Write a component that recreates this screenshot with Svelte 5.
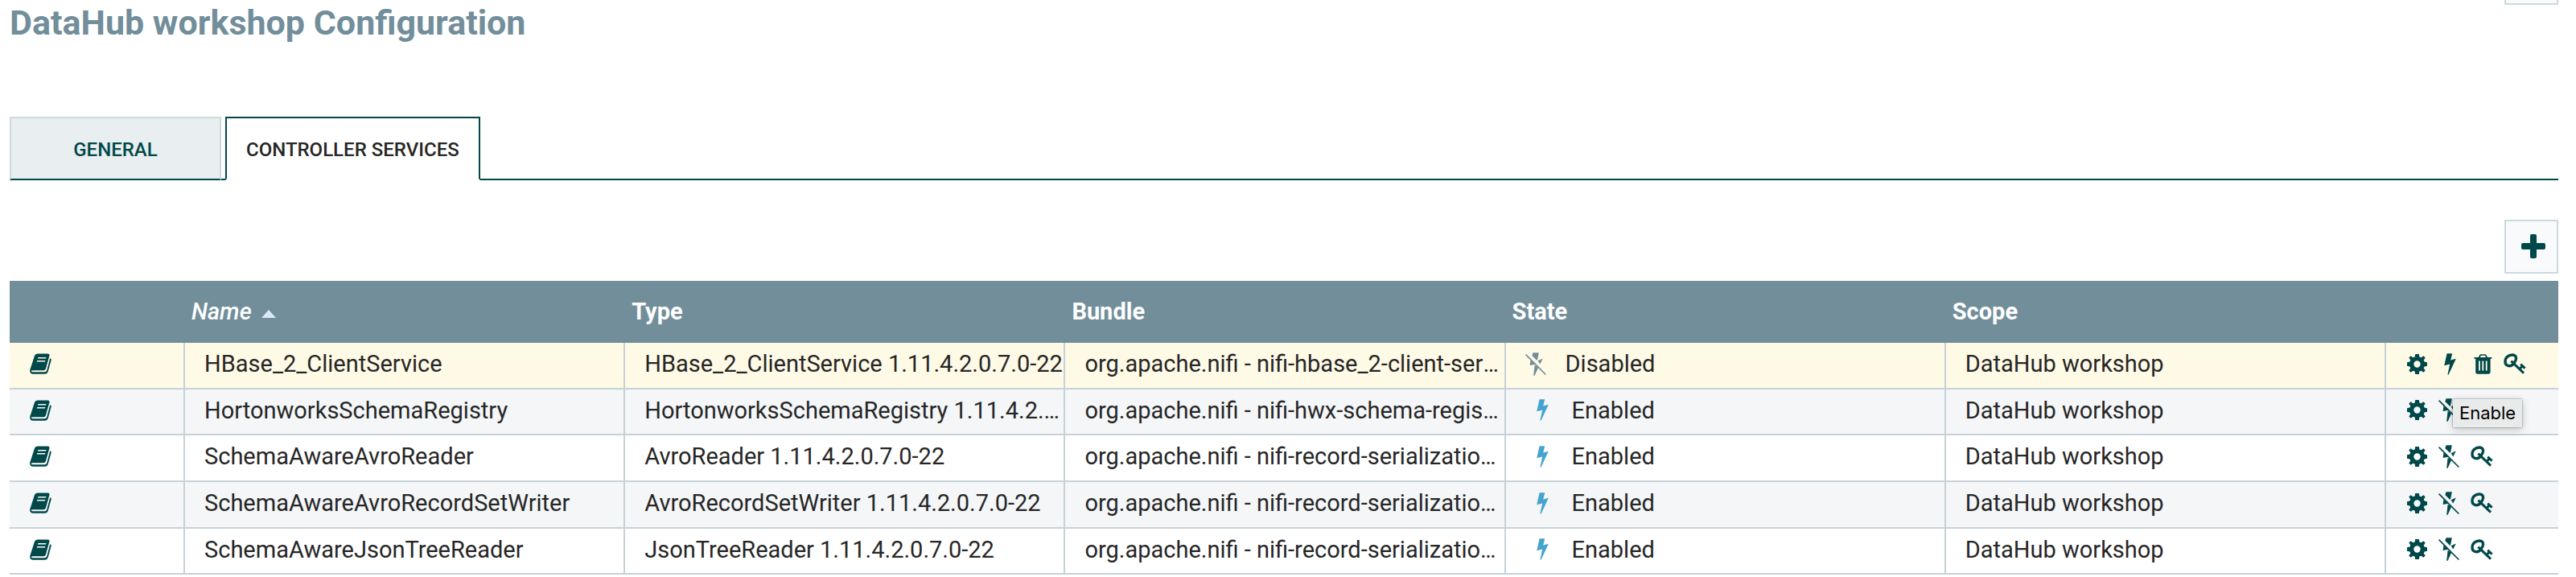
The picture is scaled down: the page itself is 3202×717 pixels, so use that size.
<script>
  const services = [
    { name: 'HBase_2_ClientService', type: 'HBase_2_ClientService 1.11.4.2.0.7.0-22', bundle: 'org.apache.nifi - nifi-hbase_2-client-services-nar', enabled: false },
    { name: 'HortonworksSchemaRegistry', type: 'HortonworksSchemaRegistry 1.11.4.2.0.7.0-22', bundle: 'org.apache.nifi - nifi-hwx-schema-registry-nar', enabled: true, tooltip: 'Enable' },
    { name: 'SchemaAwareAvroReader', type: 'AvroReader 1.11.4.2.0.7.0-22', bundle: 'org.apache.nifi - nifi-record-serialization-services-nar', enabled: true },
    { name: 'SchemaAwareAvroRecordSetWriter', type: 'AvroRecordSetWriter 1.11.4.2.0.7.0-22', bundle: 'org.apache.nifi - nifi-record-serialization-services-nar', enabled: true },
    { name: 'SchemaAwareJsonTreeReader', type: 'JsonTreeReader 1.11.4.2.0.7.0-22', bundle: 'org.apache.nifi - nifi-record-serialization-services-nar', enabled: true },
  ];
  let selected = $state(0);
</script>

{#snippet book()}
  <svg width="27" height="26" viewBox="0 0 27 26" aria-hidden="true">
    <path fill="currentColor" fill-rule="evenodd" d="M9.5 0.5H22.5Q25 0.5 24.4 3L20 19Q19.3 21.3 17 21.3H3.5Q1.8 21.3 2 22.4Q2.2 23.2 3.6 23.2H18.5Q20.6 23.2 21.2 21.2L25.2 6.2Q27.2 6.6 26.6 8.8L22.6 23Q21.7 25.8 19 25.8H4Q0.4 25.8 0.2 22Q0.1 20.6 0.8 19L6 3Q6.8 0.5 9.5 0.5ZM10.4 5L9.9 6.6H20L20.5 5ZM9.2 9L8.7 10.6H18.9L19.4 9Z" />
  </svg>
{/snippet}

{#snippet gear()}
  <svg width="25" height="25" viewBox="0 0 25 25" aria-hidden="true">
    <path fill="currentColor" fill-rule="evenodd" d="M10.2 0H14.8L15.4 3.4L17.6 4.3L20.4 2.3L22.7 4.6L20.7 7.4L21.6 9.6L25 10.2V14.8L21.6 15.4L20.7 17.6L22.7 20.4L20.4 22.7L17.6 20.7L15.4 21.6L14.8 25H10.2L9.6 21.6L7.4 20.7L4.6 22.7L2.3 20.4L4.3 17.6L3.4 15.4L0 14.8V10.2L3.4 9.6L4.3 7.4L2.3 4.6L4.6 2.3L7.4 4.3L9.6 3.4ZM12.5 8.3A4.2 4.2 0 1 0 12.5 16.7A4.2 4.2 0 1 0 12.5 8.3Z" />
  </svg>
{/snippet}

{#snippet bolt()}
  <svg width="15" height="27" viewBox="0 0 15 27" aria-hidden="true">
    <path fill="currentColor" d="M3.6 0.2H10.2L8.2 8.4L14.8 6.8L5.6 26.6H4.4L7.2 13.6L0.2 15.2Z" />
  </svg>
{/snippet}

{#snippet boltOff()}
  <svg width="26" height="29" viewBox="0 0 26 29" aria-hidden="true">
    <path fill="currentColor" d="M9.6 0.2H16.8L15.2 8.6L14.4 10L8.3 4ZM6.5 9.2L12.3 14.7L5.6 16ZM15.6 10.2L21.8 7.4L18.2 14.6ZM11.6 15.8L16.2 18.4L11.6 28.8H10.2Z" />
    <path fill="none" stroke="currentColor" stroke-width="1.7" d="M0.6 2.7L25.4 27.5" />
  </svg>
{/snippet}

{#snippet trash()}
  <svg width="23" height="25" viewBox="0 0 23 25" aria-hidden="true">
    <path fill="currentColor" fill-rule="evenodd" d="M0.4 4H5.8L7.2 1.2Q7.7 0.2 8.8 0.2H14Q15.1 0.2 15.6 1.2L17 4H22.4V5.8H20.6V22Q20.6 24.8 18 24.8H4.8Q2.2 24.8 2.2 22V5.8H0.4ZM7.9 4H14.9L14.1 2Q13.9 1.7 13.5 1.7H9.3Q8.9 1.7 8.7 2ZM6 8.4V20.6H7.8V8.4ZM10.4 8.4V20.6H12.2V8.4ZM14.8 8.4V20.6H16.6V8.4Z" />
  </svg>
{/snippet}

{#snippet key()}
  <svg width="28" height="26" viewBox="0 0 28 26" aria-hidden="true">
    <path fill="none" stroke="currentColor" stroke-width="3.4" d="M11.5 14.2C8 17 2 15.8 2 10.4C2 5.4 6 2 10.8 2C15 2 16.6 5.6 15 8.8C14 10.8 12.8 13 11.5 14.2" />
    <path fill="none" stroke="currentColor" stroke-width="3" d="M9.4 9.6L25 24.6M20 19.6L23.6 15.6M21.2 13.6L26.6 18.6" />
  </svg>
{/snippet}

<main>
  <header>
    <h1>DataHub workshop Configuration</h1>
    <button class="square" aria-label="Close"></button>
  </header>

  <nav role="tablist">
    <button class="tab" role="tab" aria-selected="false">GENERAL</button>
    <button class="tab active" role="tab" aria-selected="true">CONTROLLER SERVICES</button>
  </nav>

  <div class="toolbar">
    <button class="square" aria-label="Create a new controller service">
      <svg width="30" height="30" viewBox="0 0 30 30" aria-hidden="true">
        <path fill="currentColor" d="M13 0H17Q19 0 19 2V11H28Q30 11 30 13V17Q30 19 28 19H19V28Q19 30 17 30H13Q11 30 11 28V19H2Q0 19 0 17V13Q0 11 2 11H11V2Q11 0 13 0Z" />
      </svg>
    </button>
  </div>

  <table>
    <colgroup>
      <col class="narrow-first" />
      <col /><col /><col /><col /><col />
      <col class="narrow-last" />
    </colgroup>
    <thead>
      <tr>
        <th aria-label="Details"></th>
        <th class="sorted" aria-sort="ascending">Name<span class="arrow"></span></th>
        <th>Type</th>
        <th>Bundle</th>
        <th>State</th>
        <th>Scope</th>
        <th aria-label="Actions"></th>
      </tr>
    </thead>
    <tbody>
      {#each services as s, i}
        <tr class:selected={selected === i} onclick={() => (selected = i)}>
          <td class="details"><button class="icon" aria-label="Usage">{@render book()}</button></td>
          <td>{s.name}</td>
          <td>{s.type}</td>
          <td>{s.bundle}</td>
          <td>
            <div class="state" class:enabled={s.enabled}>
              {#if s.enabled}{@render bolt()}Enabled{:else}{@render boltOff()}Disabled{/if}
            </div>
          </td>
          <td>DataHub workshop</td>
          <td class="actions">
            <div class="buttons">
              <button class="icon" aria-label="Configure">{@render gear()}</button>
              {#if s.enabled}
                <button class="icon" aria-label="Disable">{@render boltOff()}</button>
              {:else}
                <button class="icon on" aria-label="Enable">{@render bolt()}</button>
                <button class="icon" aria-label="Remove">{@render trash()}</button>
              {/if}
              <button class="icon" aria-label="Access policies">{@render key()}</button>
              {#if s.tooltip}
                <span class="tooltip" role="tooltip">{s.tooltip}</span>
              {/if}
            </div>
          </td>
        </tr>
      {/each}
    </tbody>
  </table>
</main>

<style>
  :global(body) {
    margin: 0;
    background: #fff;
  }
  main {
    padding: 0 22px 0 12px;
    overflow: hidden;
    font-family: Roboto, sans-serif;
    font-size: 29px;
    color: #262626;
  }
  button {
    font-family: inherit;
    box-sizing: border-box;
    cursor: pointer;
  }
  svg {
    display: block;
    flex: none;
  }
  header {
    display: flex;
    justify-content: space-between;
    align-items: flex-end;
    height: 56px;
  }
  h1 {
    margin: 0;
    font-size: 43px;
    line-height: 56px;
    font-weight: 700;
    color: #728e9b;
  }
  .square {
    display: flex;
    align-items: center;
    justify-content: center;
    width: 67px;
    height: 67px;
    padding: 0 0 2px 5px;
    border: 2px solid #ccdadb;
    background: #f9fafb;
    color: #004849;
  }
  header .square {
    margin-bottom: 50px;
  }
  nav {
    display: flex;
    align-items: flex-end;
    gap: 5px;
    margin-top: 89px;
    height: 79px;
    box-shadow: inset 0 -2px #004849;
  }
  .tab {
    min-width: 263px;
    height: 79px;
    padding: 3px 24px 0;
    border: 2px solid #ccdadb;
    border-bottom-color: #004849;
    background: #e9eef0;
    font-size: 24px;
    font-weight: 500;
    color: #004849;
  }
  .tab.active {
    border-color: #004849;
    border-bottom-color: #fff;
    background: #fff;
    color: #262626;
  }
  .toolbar {
    display: flex;
    justify-content: flex-end;
    padding: 49px 0 9px;
  }
  table {
    width: 100%;
    table-layout: fixed;
    border-collapse: separate;
    border-spacing: 0;
  }
  .narrow-first {
    width: 218px;
  }
  .narrow-last {
    width: 214px;
  }
  th {
    box-sizing: border-box;
    height: 77px;
    padding: 0 8px 2px;
    background: #728e9b;
    color: #fff;
    text-align: left;
    font-weight: 700;
  }
  th.sorted {
    font-style: italic;
    font-weight: 500;
  }
  .arrow {
    display: inline-block;
    margin-left: 12px;
    border: 9px solid transparent;
    border-top: 0;
    border-bottom: 10px solid #dbe8fb;
    vertical-align: 2px;
  }
  td {
    box-sizing: border-box;
    height: 58px;
    padding: 0 0 4px 24px;
    border-right: 2px solid #c7d2d7;
    border-bottom: 2px solid #c7d2d7;
    line-height: 36px;
    white-space: nowrap;
    overflow: hidden;
    text-overflow: ellipsis;
  }
  tr:nth-child(3n + 2) td {
    height: 57px;
  }
  tr:nth-child(even) td {
    background: #f4f6f8;
  }
  tr.selected td {
    background: #fffae6;
  }
  td:last-child {
    border-right: 0;
  }
  td.details {
    padding-left: 25px;
  }
  .icon {
    display: flex;
    padding: 0;
    border: 0;
    background: none;
    color: #004849;
  }
  .state {
    display: flex;
    align-items: center;
    gap: 24px;
    color: #262626;
  }
  .state svg {
    color: #728e9b;
  }
  .state.enabled {
    padding-left: 14px;
    gap: 29px;
  }
  .state.enabled svg {
    color: #44a3cf;
  }
  td.actions {
    overflow: visible;
  }
  .buttons {
    position: relative;
    display: flex;
    align-items: center;
    gap: 14px;
    padding-left: 2px;
  }
  .on {
    margin: 0 8px 0 7px;
  }
  .tooltip {
    position: absolute;
    left: 59px;
    top: 1px;
    padding: 0 8px;
    background: #e9eaea;
    box-shadow: 0 0 2px rgba(0, 0, 0, 0.5), 0 3px 10px rgba(0, 0, 0, 0.2);
    font-family: Inter, sans-serif;
    font-size: 22px;
    line-height: 35px;
    color: #000;
  }
</style>
